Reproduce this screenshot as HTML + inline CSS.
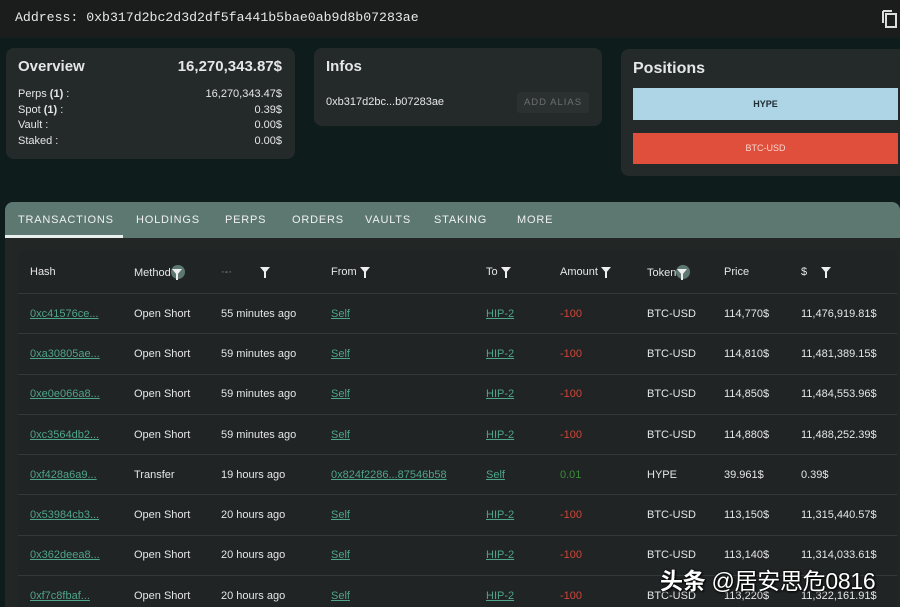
<!DOCTYPE html><html><head><meta charset="utf-8"><style>
*{margin:0;padding:0;box-sizing:border-box}
body{width:900px;height:607px;overflow:hidden;background:#0e1d1b;font-family:"Liberation Sans",sans-serif;color:#e6e6e6;position:relative}
.top{position:absolute;left:0;top:0;width:900px;height:38px;background:#1b1c1c}
.addr{position:absolute;left:15px;top:10px;font-family:"Liberation Mono",monospace;font-size:13.2px;color:#e8e8e8}
.card{position:absolute;background:#242a2a;border-radius:8px}
.abs{position:absolute}
.tabs{position:absolute;left:5px;top:202px;width:895px;height:36px;background:#5c7871;border-radius:8px 8px 0 0}
.tab{position:absolute;top:12px;font-size:11px;letter-spacing:0.8px;color:#f0f0f0}
.panel{position:absolute;left:5px;top:238px;width:895px;height:369px;background:#222726}
.tbl{position:absolute;left:18px;top:250px;width:879px;height:357px;background:#202424;border-radius:8px 8px 0 0}
.c{position:absolute;font-size:11px;color:#e6e6e6;white-space:nowrap;margin-top:1px}
.lk{color:#4fa58c;text-decoration:underline}
.red{color:#d0463a}.grn{color:#3d8a3d}
.line{position:absolute;left:18px;width:879px;height:1px;background:#33393a}
.f{display:inline-block;width:0;height:0;border-left:5px solid transparent;border-right:5px solid transparent;border-top:6px solid #eee;position:relative;top:-2px;margin-left:3px}
.f:after{content:"";position:absolute;left:-1px;top:-1px;width:2px;height:6px;background:#eee}
.fc{display:inline-block;width:14px;height:14px;border-radius:7px;background:#5c7871;vertical-align:middle;position:relative;top:-1px}
.fc .f{position:absolute;left:1px;top:4px;margin:0}
</style></head><body>
<div class="top"></div>
<div class="addr">Address: 0xb317d2bc2d3d2df5fa441b5bae0ab9d8b07283ae</div>
<svg class="abs" style="left:881px;top:9px" width="17" height="20" viewBox="0 0 17 20"><path d="M2 2v12M2 2h9" stroke="#ddd" stroke-width="2" fill="none"/><rect x="5" y="5" width="10" height="13" stroke="#ddd" stroke-width="2" fill="none"/></svg>
<div class="card" style="left:6px;top:48px;width:289px;height:111px"></div>
<div class="abs" style="left:18px;top:58px;font-size:15px;font-weight:bold">Overview</div>
<div class="abs" style="right:618px;top:58px;font-size:15px;font-weight:bold">16,270,343.87$</div>
<div class="abs" style="left:18px;top:87px;font-size:11px;line-height:15.5px">Perps <b>(1)</b> :<br>Spot <b>(1)</b> :<br>Vault :<br>Staked :</div>
<div class="abs" style="right:618px;top:87px;font-size:11px;line-height:15.5px;text-align:right">16,270,343.47$<br>0.39$<br>0.00$<br>0.00$</div>
<div class="card" style="left:314px;top:48px;width:288px;height:78px"></div>
<div class="abs" style="left:326px;top:58px;font-size:15px;font-weight:bold">Infos</div>
<div class="abs" style="left:326px;top:96px;font-size:11px">0xb317d2bc...b07283ae</div>
<div class="abs" style="left:517px;top:92px;width:72px;height:21px;background:#2b3131;border-radius:3px;font-size:9.5px;letter-spacing:1px;color:#6b6f6f;text-align:center;line-height:21px">ADD ALIAS</div>
<div class="card" style="left:621px;top:49px;width:285px;height:127px"></div>
<div class="abs" style="left:633px;top:60px;font-size:16px;font-weight:bold">Positions</div>
<div class="abs" style="left:633px;top:88px;width:265px;height:32px;background:#add5e6;color:#1d2b33;font-size:9px;font-weight:bold;text-align:center;line-height:32px">HYPE</div>
<div class="abs" style="left:633px;top:133px;width:265px;height:31px;background:#e04f3c;color:#f7d6cf;font-size:9px;text-align:center;line-height:31px">BTC-USD</div>
<div class="tabs">
<div class="tab" style="left:13px">TRANSACTIONS</div><div class="tab" style="left:131px">HOLDINGS</div><div class="tab" style="left:220px">PERPS</div><div class="tab" style="left:287px">ORDERS</div><div class="tab" style="left:360px">VAULTS</div><div class="tab" style="left:429px">STAKING</div><div class="tab" style="left:512px">MORE</div>
<div class="abs" style="left:0;top:33px;width:118px;height:3px;background:#e8efec"></div>
</div>
<div class="panel"></div>
<div class="tbl"></div>
<div class="c" style="left:30px;top:265px">Hash</div>
<div class="c" style="left:134px;top:265px">Method<span class="fc"><span class="f"></span></span></div>
<div class="c" style="left:221px;top:265px;color:#888">·-·<span class="f" style="margin-left:28px"></span></div>
<div class="c" style="left:331px;top:265px">From<span class="f"></span></div>
<div class="c" style="left:486px;top:265px">To<span class="f"></span></div>
<div class="c" style="left:560px;top:265px">Amount<span class="f"></span></div>
<div class="c" style="left:647px;top:265px">Token<span class="fc"><span class="f"></span></span></div>
<div class="c" style="left:724px;top:265px">Price</div>
<div class="c" style="left:801px;top:265px">$<span class="f" style="margin-left:14px"></span></div>
<div class="line" style="top:293px"></div><div class="line" style="top:333px"></div><div class="line" style="top:374px"></div><div class="line" style="top:414px"></div><div class="line" style="top:454px"></div><div class="line" style="top:494px"></div><div class="line" style="top:535px"></div><div class="line" style="top:575px"></div>

<div class="c lk" style="left:30px;top:307px">0xc41576ce...</div><div class="c" style="left:134px;top:307px">Open Short</div><div class="c" style="left:221px;top:307px">55 minutes ago</div><div class="c lk" style="left:331px;top:307px">Self</div><div class="c lk" style="left:486px;top:307px">HIP-2</div><div class="c red" style="left:560px;top:307px">-100</div><div class="c" style="left:647px;top:307px">BTC-USD</div><div class="c" style="left:724px;top:307px">114,770$</div><div class="c" style="left:801px;top:307px">11,476,919.81$</div>

<div class="c lk" style="left:30px;top:347px">0xa30805ae...</div><div class="c" style="left:134px;top:347px">Open Short</div><div class="c" style="left:221px;top:347px">59 minutes ago</div><div class="c lk" style="left:331px;top:347px">Self</div><div class="c lk" style="left:486px;top:347px">HIP-2</div><div class="c red" style="left:560px;top:347px">-100</div><div class="c" style="left:647px;top:347px">BTC-USD</div><div class="c" style="left:724px;top:347px">114,810$</div><div class="c" style="left:801px;top:347px">11,481,389.15$</div>

<div class="c lk" style="left:30px;top:387px">0xe0e066a8...</div><div class="c" style="left:134px;top:387px">Open Short</div><div class="c" style="left:221px;top:387px">59 minutes ago</div><div class="c lk" style="left:331px;top:387px">Self</div><div class="c lk" style="left:486px;top:387px">HIP-2</div><div class="c red" style="left:560px;top:387px">-100</div><div class="c" style="left:647px;top:387px">BTC-USD</div><div class="c" style="left:724px;top:387px">114,850$</div><div class="c" style="left:801px;top:387px">11,484,553.96$</div>

<div class="c lk" style="left:30px;top:428px">0xc3564db2...</div><div class="c" style="left:134px;top:428px">Open Short</div><div class="c" style="left:221px;top:428px">59 minutes ago</div><div class="c lk" style="left:331px;top:428px">Self</div><div class="c lk" style="left:486px;top:428px">HIP-2</div><div class="c red" style="left:560px;top:428px">-100</div><div class="c" style="left:647px;top:428px">BTC-USD</div><div class="c" style="left:724px;top:428px">114,880$</div><div class="c" style="left:801px;top:428px">11,488,252.39$</div>

<div class="c lk" style="left:30px;top:468px">0xf428a6a9...</div><div class="c" style="left:134px;top:468px">Transfer</div><div class="c" style="left:221px;top:468px">19 hours ago</div><div class="c lk" style="left:331px;top:468px">0x824f2286...87546b58</div><div class="c lk" style="left:486px;top:468px">Self</div><div class="c grn" style="left:560px;top:468px">0.01</div><div class="c" style="left:647px;top:468px">HYPE</div><div class="c" style="left:724px;top:468px">39.961$</div><div class="c" style="left:801px;top:468px">0.39$</div>

<div class="c lk" style="left:30px;top:508px">0x53984cb3...</div><div class="c" style="left:134px;top:508px">Open Short</div><div class="c" style="left:221px;top:508px">20 hours ago</div><div class="c lk" style="left:331px;top:508px">Self</div><div class="c lk" style="left:486px;top:508px">HIP-2</div><div class="c red" style="left:560px;top:508px">-100</div><div class="c" style="left:647px;top:508px">BTC-USD</div><div class="c" style="left:724px;top:508px">113,150$</div><div class="c" style="left:801px;top:508px">11,315,440.57$</div>

<div class="c lk" style="left:30px;top:548px">0x362deea8...</div><div class="c" style="left:134px;top:548px">Open Short</div><div class="c" style="left:221px;top:548px">20 hours ago</div><div class="c lk" style="left:331px;top:548px">Self</div><div class="c lk" style="left:486px;top:548px">HIP-2</div><div class="c red" style="left:560px;top:548px">-100</div><div class="c" style="left:647px;top:548px">BTC-USD</div><div class="c" style="left:724px;top:548px">113,140$</div><div class="c" style="left:801px;top:548px">11,314,033.61$</div>

<div class="c lk" style="left:30px;top:589px">0xf7c8fbaf...</div><div class="c" style="left:134px;top:589px">Open Short</div><div class="c" style="left:221px;top:589px">20 hours ago</div><div class="c lk" style="left:331px;top:589px">Self</div><div class="c lk" style="left:486px;top:589px">HIP-2</div><div class="c red" style="left:560px;top:589px">-100</div><div class="c" style="left:647px;top:589px">BTC-USD</div><div class="c" style="left:724px;top:589px">113,220$</div><div class="c" style="left:801px;top:589px">11,322,161.91$</div>

<div class="abs" style="left:660px;top:562px;font-family:'Liberation Sans','Noto Sans CJK SC',sans-serif;font-size:23px;color:#fff;text-shadow:0 0 2px #000,1px 1px 2px #000;white-space:nowrap;letter-spacing:-0.3px"><b>头条</b> @居安思危0816</div>
</body></html>
